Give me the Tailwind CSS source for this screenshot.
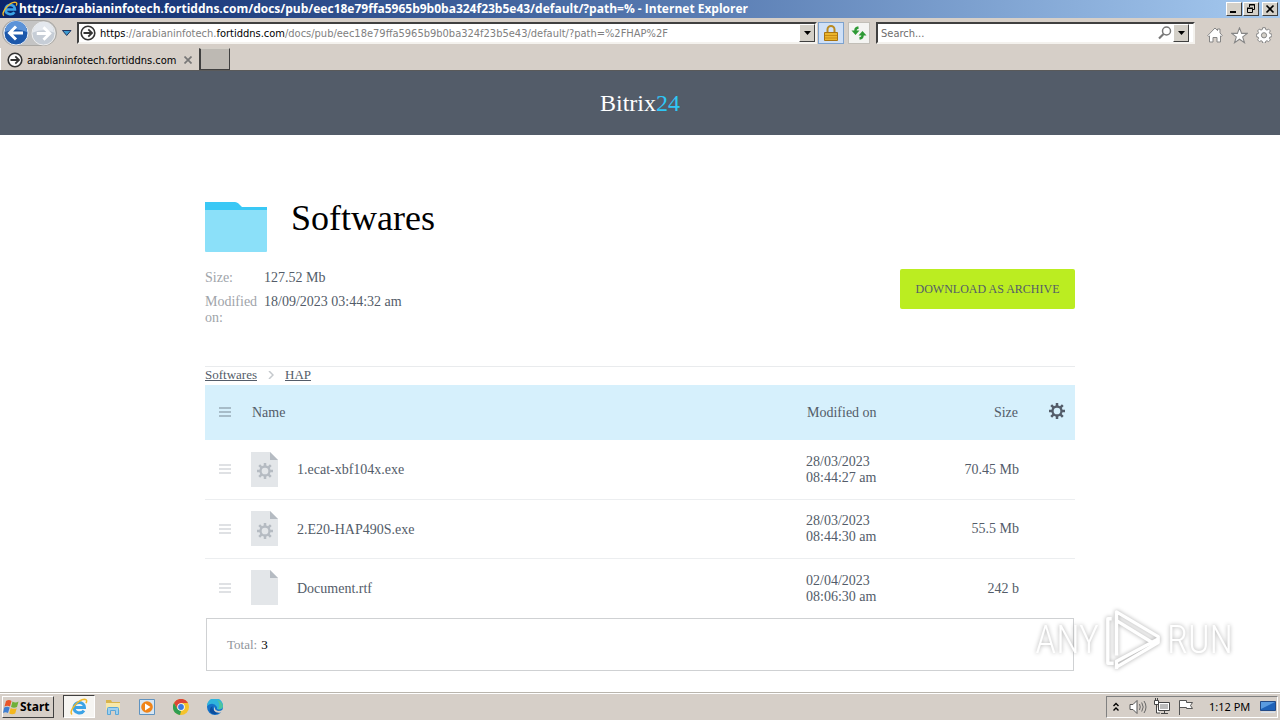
<!DOCTYPE html>
<html lang="en">
<head>
<meta charset="utf-8">
<meta name="viewport" content="width=device-width, initial-scale=1">
<title>Softwares - Bitrix24</title>
<script src="https://cdn.jsdelivr.net/npm/@tailwindcss/browser@4"></script>
</head>
<body class="flex min-h-screen flex-col bg-white font-['Liberation_Serif',serif] text-sm leading-4 text-[#535c69]">
<svg class="hidden" aria-hidden="true">
  <symbol id="gear" viewBox="0 0 16 16"><g fill="none" stroke="currentColor"><circle cx="8" cy="8" r="4.500" stroke-width="2.300"/><path stroke-width="2.500" d="M8 0v3M8 13v3M0 8h3M13 8h3M2.200 2.200l2.200 2.200M11.600 11.600l2.200 2.200M2.200 13.800l2.200-2.200M11.600 4.400l2.200-2.200"/></g></symbol>
  <symbol id="file" viewBox="0 0 27 35"><path fill="#e3e6e9" d="M0 0h19l8 8v27H0z"/><path fill="#b5bbc2" d="M19 0l8 8h-8z"/></symbol>
  <symbol id="bars" viewBox="0 0 12 10"><path stroke="currentColor" stroke-width="1.600" d="M0 1h12M0 5h12M0 9h12"/></symbol>
  <symbol id="go" viewBox="0 0 16 16"><circle cx="8" cy="8" r="6.800" fill="#fff" stroke="#333" stroke-width="1.600"/><path fill="none" stroke="#333" stroke-width="1.800" d="M3.500 8h8M8.300 4.400L12 8l-3.700 3.600"/></symbol>
  <symbol id="ie" viewBox="0 0 18 18"><path fill="none" stroke="#3ba3e6" stroke-width="3" d="M4 9.600h10.500C14.500 2.800 4 2.800 4 9.600c0 6 7.500 6.600 10 3"/><path fill="none" stroke="#f0b92a" stroke-width="1.500" d="M2 16.500C-1.500 13 8 1.500 14.500 1.200c2.500 0 2.500 2 1.500 4"/></symbol>
</svg>

<header class="bg-[#d6cfc8] font-['DejaVu_Sans_Condensed','DejaVu_Sans',sans-serif] text-[11px] text-black">
  <div class="flex h-[18px] items-center gap-px bg-linear-to-r from-[#0a246a] to-[#a6caf0] pl-0.5 pr-0.5">
    <svg class="size-4 shrink-0"><use href="#ie"/></svg>
    <h1 class="flex-1 truncate font-['Open_Sans',sans-serif] text-xs font-bold text-white">https://arabianinfotech.fortiddns.com/docs/pub/eec18e79ffa5965b9b0ba324f23b5e43/default/?path=% - Internet Explorer</h1>
    <button aria-label="Minimize" class="h-3.5 w-4 border border-t-white border-l-white border-r-[#404040] border-b-[#404040] bg-[#d4d0c8]"><svg class="h-3 w-3.5" viewBox="0 0 14 12"><path fill="#000" d="M3 8h6v2H3z"/></svg></button>
    <button aria-label="Restore" class="h-3.5 w-4 border border-t-white border-l-white border-r-[#404040] border-b-[#404040] bg-[#d4d0c8]"><svg class="h-3 w-3.5" viewBox="0 0 14 12"><path fill="none" stroke="#000" d="M5.500 4V1.500h5v5H9M3 5.500h5.500v4h-5V5M5 2h6M3 5h6"/></svg></button>
    <button aria-label="Close" class="ml-0.5 h-3.5 w-4 border border-t-white border-l-white border-r-[#404040] border-b-[#404040] bg-[#d4d0c8]"><svg class="h-3 w-3.5" viewBox="0 0 14 12"><path stroke="#000" stroke-width="1.700" d="M3.500 2.500l7 7M10.500 2.500l-7 7"/></svg></button>
  </div>
  <div class="flex h-[30px] items-center gap-1 pl-0.5 pr-2">
    <div class="flex h-[26px] items-center rounded-full border border-[#aaa8a4] bg-[#c4c4c4]">
      <button aria-label="Back" class="size-[26px]"><svg viewBox="0 0 26 26"><circle cx="13" cy="13" r="12" fill="#1c58ab" stroke="#e8edf5"/><path fill="#5c93d8" d="M2 12a11 11 0 0 1 22 0q-11-5-22 0z"/><path fill="none" stroke="#fff" stroke-width="3" d="M7 13h13M13 6.500L6.500 13l6.500 6.500"/></svg></button>
      <button aria-label="Forward" class="ml-0.5 size-[25px]"><svg viewBox="0 0 26 26"><circle cx="13" cy="13" r="12" fill="#c6cdd6" stroke="#eee"/><path fill="#e4e8ee" d="M2 12a11 11 0 0 1 22 0q-11-5-22 0z"/><path fill="none" stroke="#fff" stroke-width="3" d="M6 13h13M13 6.500l6.500 6.500-6.500 6.500"/></svg></button>
    </div>
    <button aria-label="Recent pages" class="w-3"><svg viewBox="0 0 12 8"><path fill="#3c9bd0" stroke="#1d3461" d="M1.500 1.500h8.500L5.700 6.500z"/></svg></button>
    <div class="flex flex-1 items-center gap-px">
      <div class="flex h-[22px] min-w-0 flex-1 items-center border-2 border-t-[#404040] border-l-[#404040] border-r-[#f4f2ee] border-b-[#f4f2ee] bg-white">
        <svg class="mx-1 ml-px size-4 shrink-0"><use href="#go"/></svg>
        <a href="#" class="flex-1 truncate pt-px text-[#808080]"><span class="text-black">https</span>://arabianinfotech.<span class="text-black">fortiddns.com</span>/docs/pub/eec18e79ffa5965b9b0ba324f23b5e43/default/?path=%2FHAP%2F</a>
        <button aria-label="Show address list" class="flex h-[18px] w-4 items-center justify-center border border-t-white border-l-white border-r-[#404040] border-b-[#404040] bg-[#d4d0c8]"><svg class="h-1 w-[7px]" viewBox="0 0 7 4"><path d="M0 0h7L3.500 4z"/></svg></button>
      </div>
      <button aria-label="Security report" class="flex h-[22px] w-[26px] items-center justify-center border border-[#7da2ce] bg-[#cfe0f7]"><svg class="h-4 w-3.5" viewBox="0 0 14 16"><path fill="none" stroke="#b98a22" stroke-width="2" d="M3.500 8V4.500a3.500 3.500 0 0 1 7 0V8"/><path fill="#eab52c" stroke="#a87412" d="M.5 7.500h13v8H.5z"/><path stroke="#c98a14" d="M1 10.500h12M1 13h12"/></svg></button>
    </div>
    <button aria-label="Refresh" class="flex size-[22px] items-center justify-center border border-[#c2bfb8] bg-[#f4f4f2]"><svg class="size-4" viewBox="0 0 16 16"><path fill="none" stroke="#2e9a35" stroke-width="2.400" d="M4.500 6.500V5q0-2 3-2.500M11.500 9.500V11q0 2-3 2.500"/><path fill="#2e9a35" d="M.5 5.500h8L4.500 10zM7.500 10.500h8L11.500 6z"/></svg></button>
    <div class="ml-0.5 flex h-[22px] w-[319px] items-center border-2 border-t-[#404040] border-l-[#404040] border-r-[#f4f2ee] border-b-[#f4f2ee] bg-white">
      <input type="text" aria-label="Search" placeholder="Search..." class="min-w-0 flex-1 pt-px pl-[3px] outline-none placeholder:text-[#6d6d6d]">
      <button aria-label="Search" class="size-4"><svg viewBox="0 0 16 16"><circle cx="9.500" cy="6" r="4" fill="none" stroke="#777" stroke-width="1.500"/><path stroke="#777" stroke-width="2.200" d="M6.500 9L2 13.500"/></svg></button>
      <button aria-label="Search providers" class="mr-1 flex h-[18px] w-4 items-center justify-center border border-t-white border-l-white border-r-[#404040] border-b-[#404040] bg-[#d4d0c8]"><svg class="h-1 w-[7px]" viewBox="0 0 7 4"><path d="M0 0h7L3.500 4z"/></svg></button>
    </div>
    <div class="ml-2 flex items-center gap-2 pt-1">
      <button aria-label="Home" class="size-4"><svg viewBox="0 0 16 16"><path fill="#fff" stroke="#858585" d="M.8 8.500L8 1l2.500 2.600V2H13v4l2.200 2.500-1 1-.7-.7V15H10v-4.500H6V15H2.500V8.800l-.7.700z"/></svg></button>
      <button aria-label="Favorites" class="size-[17px]"><svg viewBox="0 0 16 16"><path fill="#fff" stroke="#858585" d="M8 .8l2 5.200h5.300L11 9.300l1.700 5.500L8 11.500l-4.700 3.300L5 9.300.7 6H6z"/></svg></button>
      <button aria-label="Tools" class="size-4"><svg viewBox="0 0 16 16"><path fill="#fff" stroke="#858585" d="M6.700.7h2.600l.4 1.800 1.300.6 1.600-1 1.800 1.800-1 1.600.5 1.200 1.900.4v2.600l-1.900.4-.5 1.200 1 1.600-1.800 1.800-1.600-1-1.300.6-.4 1.800H6.700l-.4-1.800-1.300-.6-1.600 1-1.800-1.800 1-1.600-.5-1.200L.3 9.700V7.100l1.800-.4.5-1.200-1-1.600 1.800-1.800 1.600 1 1.300-.6z"/><circle cx="8" cy="8.300" r="2.600" fill="#d4d0c8" stroke="#858585"/></svg></button>
    </div>
  </div>
  <div class="flex h-[23px] items-end border-b border-[#5a5a5a]">
    <div class="flex h-[22px] w-[198px] items-center gap-1 border-l border-white pl-1.5 pr-1.5 pt-0.5">
      <svg class="size-4 shrink-0"><use href="#go"/></svg>
      <span class="flex-1 whitespace-nowrap pt-px">arabianinfotech.fortiddns.com</span>
      <button aria-label="Close tab" class="size-2"><svg viewBox="0 0 8 8"><path stroke="#777" stroke-width="1.700" d="M.5.5l7 7M7.500.5l-7 7"/></svg></button>
    </div>
    <button aria-label="New tab" class="ml-px h-[22px] w-[31px] self-end border border-t-[#d4d0c8] border-l-2 border-r-[#404040] border-b-[#404040] border-l-[#404040] bg-[#bdb9b3]"></button>
  </div>
</header>

<div class="flex h-16 items-center justify-center bg-[#535c69]">
  <a href="#" class="text-2xl text-white">Bitrix<span class="text-[#2fc6f6]">24</span></a>
</div>

<main class="mx-auto w-[870px] max-w-full flex-1 pt-16">
  <div class="flex gap-6 pt-[3px]">
    <svg class="h-[50px] w-[62px]" viewBox="0 0 62 50"><path fill="#3ac8f5" d="M0 0h30q2 0 3.500 1.500L37 5h25v6H0z"/><path fill="#8be0f9" d="M0 8h62v41q0 1-1 1H1q-1 0-1-1z"/></svg>
    <h2 class="text-4xl leading-8 text-black">Softwares</h2>
  </div>
  <div class="flex items-start justify-between pt-[17px]">
    <dl class="grid grid-cols-[59px_auto] gap-y-2 pt-px">
      <dt class="text-[#a0a4aa]">Size:</dt><dd>127.52 Mb</dd>
      <dt class="text-[#a0a4aa]">Modified on:</dt><dd>18/09/2023 03:44:32 am</dd>
    </dl>
    <button class="h-10 w-[175px] rounded-xs bg-[#bbed21] text-xs">DOWNLOAD AS ARCHIVE</button>
  </div>
  <nav aria-label="Breadcrumb" class="mt-10 flex h-[19px] items-center gap-[11px] border-t border-[#e9ebed] pb-0.5 text-[13px]">
    <a href="#" class="underline">Softwares</a>
    <svg class="h-2 w-1.5" viewBox="0 0 6 8"><path fill="none" stroke="#c5c9cd" stroke-width="1.500" d="M1 0l4 4-4 4"/></svg>
    <a href="#" class="underline">HAP</a>
  </nav>
  <table class="w-full table-fixed text-left">
    <colgroup><col class="w-[46px]"><col class="w-[46px]"><col><col class="w-[92px]"><col class="w-[121px]"><col class="w-14"></colgroup>
    <thead>
      <tr class="h-[55px] bg-[#d6f0fc]">
        <th class="pb-0.5 pl-3.5 text-[#98aab6]"><svg class="h-2.5 w-3"><use href="#bars"/></svg></th>
        <th colspan="2" class="pl-px font-normal">Name</th>
        <th class="pl-px font-normal">Modified on</th>
        <th class="pr-px text-right font-normal">Size</th>
        <th class="pr-2.5 pb-1"><button aria-label="Columns" class="ml-auto block size-4"><svg class="size-4"><use href="#gear"/></svg></button></th>
      </tr>
    </thead>
    <tbody>
      <tr class="h-[59px] border-b border-[#eceef0]">
        <td class="pl-3.5 text-[#d5d8dc]"><svg class="h-2.5 w-3"><use href="#bars"/></svg></td>
        <td><span class="grid h-[35px] w-[27px] place-items-center text-[#b5bbc2]"><svg class="col-start-1 row-start-1 h-[35px] w-[27px]"><use href="#file"/></svg><svg class="col-start-1 row-start-1 mt-1 size-4"><use href="#gear"/></svg></span></td>
        <td class="pt-0.5"><a href="#">1.ecat-xbf104x.exe</a></td>
        <td class="pt-0.5">28/03/2023 08:44:27&nbsp;am</td>
        <td class="pt-px text-right">70.45 Mb</td><td></td>
      </tr>
      <tr class="h-[59px] border-b border-[#eceef0]">
        <td class="pl-3.5 text-[#d5d8dc]"><svg class="h-2.5 w-3"><use href="#bars"/></svg></td>
        <td><span class="grid h-[35px] w-[27px] place-items-center text-[#b5bbc2]"><svg class="col-start-1 row-start-1 h-[35px] w-[27px]"><use href="#file"/></svg><svg class="col-start-1 row-start-1 mt-1 size-4"><use href="#gear"/></svg></span></td>
        <td class="pt-0.5"><a href="#">2.E20-HAP490S.exe</a></td>
        <td>28/03/2023 08:44:30&nbsp;am</td>
        <td class="text-right">55.5 Mb</td><td></td>
      </tr>
      <tr class="h-[60px]">
        <td class="pl-3.5 text-[#d5d8dc]"><svg class="h-2.5 w-3"><use href="#bars"/></svg></td>
        <td class="pb-0.5"><svg class="h-[35px] w-[27px]"><use href="#file"/></svg></td>
        <td class="pt-0.5"><a href="#">Document.rtf</a></td>
        <td class="pt-0.5">02/04/2023 08:06:30&nbsp;am</td>
        <td class="pt-0.5 text-right">242 b</td><td></td>
      </tr>
    </tbody>
  </table>
  <div class="mx-px flex h-[53px] items-center gap-1 border border-[#cfd1d3] px-5 text-[13px] text-[#8f949b]">Total: <span class="text-black">3</span></div>
</main>

<div class="pointer-events-none absolute top-[609px] right-[47px] flex items-center gap-1 font-['Roboto_Condensed',Roboto,sans-serif] text-[38px] leading-none font-light text-white drop-shadow-[0_0_2px_#aaa]">
  <span>ANY</span>
  <svg class="h-[62px] w-[60px]" viewBox="0 0 60 64" fill="none" stroke="#fff" stroke-width="3.500" stroke-linejoin="round"><path d="M13 48V3l43 25.500v6L13 60M13 3v9l36 22M56 31L13 54v8M8 10H4v46h6"/></svg>
  <span>RUN</span>
</div>

<footer class="flex h-7 items-center border-t border-[#b9b5ad] bg-[#d6cfc8] pl-0.5 pr-0.5 font-['Noto_Sans',sans-serif] text-[11px] text-black shadow-[inset_0_1px_#fff]">
  <button class="flex h-[22px] w-[52px] items-center gap-px border border-t-white border-l-white border-r-[#404040] border-b-[#404040] text-xs font-bold"><svg class="size-4 shrink-0" viewBox="0 0 16 16"><path fill="#e8562a" d="M3 2q3-2 5.500 0L7 7.500Q4.500 6 1.500 7.500z"/><path fill="#6fb03a" d="M9.500 2.500q3 1.800 6 0L14 8q-3 1.500-6 0z"/><path fill="#3f7fd2" d="M1.200 8.500q3-1.500 5.500 0L5 14q-2.500-1.500-5 0z"/><path fill="#f3b71f" d="M7.700 9q3 1.600 6 .200L12.200 14.500q-3 1.500-6 0z"/></svg>Start</button>
  <nav aria-label="Taskbar" class="ml-[9px] flex items-center">
    <button aria-label="Internet Explorer" class="flex h-[23px] w-8 items-center justify-center border border-t-[#404040] border-l-[#404040] border-r-white border-b-white bg-[#f6f5f2]"><svg class="size-[18px]"><use href="#ie"/></svg></button>
    <button aria-label="Explorer" class="ml-2.5 size-4"><svg viewBox="0 0 16 16"><path fill="#d9b44c" d="M1 1h5l1 2h8v3H1z"/><path fill="#f8e8a8" d="M1 4h14v7H1z"/><path fill="#9fd0ee" stroke="#5aa7d8" d="M2.500 15.500V9.500q0-1 1-1h9q1 0 1 1v6h-3v-4h-5v4z"/></svg></button>
    <button aria-label="Media Player" class="ml-[18px] size-4"><svg viewBox="0 0 16 16"><path fill="#d7e6f3" stroke="#5f93c0" d="M.5.5h15v15H.5z"/><circle cx="8" cy="8" r="5.800" fill="#f08418"/><path fill="#fff" d="M6 4.500l5.500 3.500L6 11.500z"/></svg></button>
    <button aria-label="Chrome" class="ml-[18px] size-4"><svg viewBox="0 0 16 16"><circle cx="8" cy="8" r="8" fill="#f5c32c"/><path fill="#dd4537" d="M1 4a8 8 0 0 1 14 0H8L4.500 10z"/><path fill="#2f9e52" d="M1 4l3.500 6L8 12l-1 4A8 8 0 0 1 1 4z"/><circle cx="8" cy="8" r="3.800" fill="#fff"/><circle cx="8" cy="8" r="2.900" fill="#3b7be0"/></svg></button>
    <button aria-label="Edge" class="ml-[18px] size-4"><svg viewBox="0 0 16 16"><circle cx="8" cy="8" r="8" fill="#1572c8"/><path fill="#2fb4dc" d="M0 7A8 8 0 0 1 16 7c0 3-3 4-6 3V8Q6 2 0 7z"/><path fill="#4cc4a0" d="M10 1a8 8 0 0 1 6 6c0 2-2 3.500-5 3.200Q14 5 10 1z"/><path fill="#0c4fa0" d="M5.500 7q-1 6 7.500 6-6 4.500-10 0-1-4 2.500-6z"/><path fill="#d6cfc8" d="M8 7.500q-1 3.500 3 4.500 3 0 5-1.500v2.500l-2 .5q-5 1-7-2Q6.500 9 8 7.500z"/></svg></button>
  </nav>
  <div class="ml-auto flex h-[22px] w-[172px] items-center border border-t-[#808080] border-l-[#808080] border-r-white border-b-white pl-1.5">
    <button aria-label="Show hidden icons" class="h-2.5 w-1.5"><svg viewBox="0 0 6 10"><path fill="none" stroke="#000" stroke-width="1.400" d="M.5 4L3 1.500 5.500 4M.5 8.500L3 6l2.500 2.500"/></svg></button>
    <svg class="ml-2.5 size-[18px]" viewBox="0 0 18 18"><path fill="#fff" stroke="#555" d="M1 6.500h3l4-4v13l-4-4H1z"/><path fill="none" stroke="#666" d="M10.500 6q1.500 3 0 6M12.700 4.500q3 4.500 0 9M15 3q4 6 0 12"/></svg>
    <svg class="ml-1.5 size-[18px]" viewBox="0 0 18 18"><path fill="#fff" stroke="#444" d="M5.500 4.500h11v8h-11zM8 15.500h7M11.500 13v2M1.500 2.500h4v4h-4zM3.500 7v8H7"/><path fill="#bbb" d="M7 6h8v5H7z"/><path stroke="#444" d="M2.500 0v2M4.500 0v2"/></svg>
    <svg class="ml-1.5 size-[18px]" viewBox="0 0 18 18"><path fill="#fff" stroke="#555" d="M2.500 17V2.500h7v2h6l-2 3 2 3h-6v-1h-7"/></svg>
    <span class="ml-3.5 whitespace-nowrap">1:12 PM</span>
    <svg class="ml-auto mr-px h-3.5 w-4" viewBox="0 0 16 14"><path fill="#1f62b8" stroke="#234a86" d="M.5 1.500h15v9H.5z"/><path fill="#5a9be0" d="M1 2h14L1 9z"/><path fill="#d8dfe8" d="M1 11.500h14V13H1z"/></svg>
  </div>
</footer>
</body>
</html>
